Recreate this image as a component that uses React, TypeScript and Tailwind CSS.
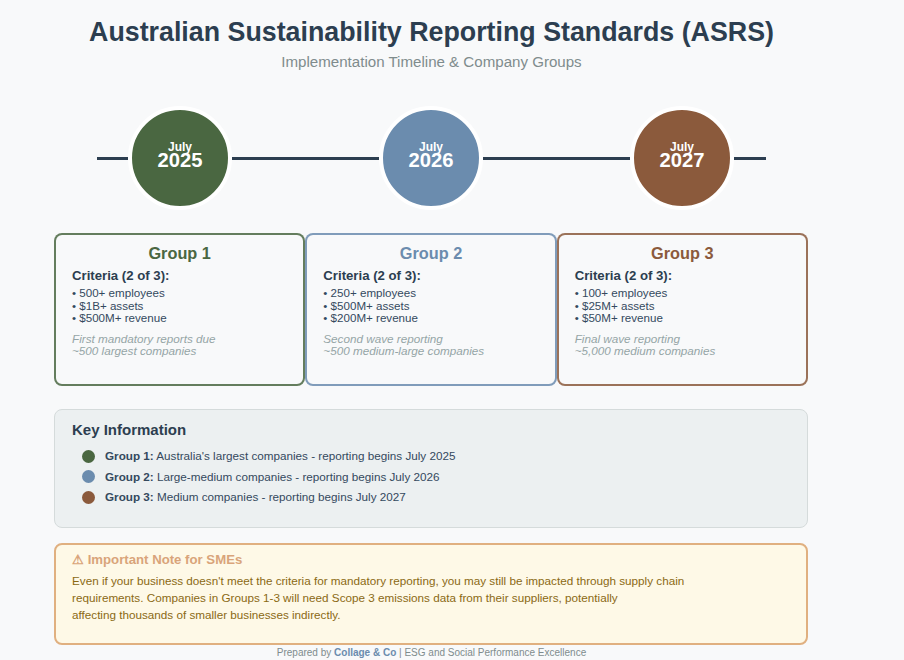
import React from "react";

const FONT = "font-['Liberation_Sans',Arial,sans-serif]";

const groups = [
  {
    name: "Group 1",
    border: "border-[#4a6741]/85",
    title: "text-[#4a6741]",
    criteria: ["500+ employees", "$1B+ assets", "$500M+ revenue"],
    note: ["First mandatory reports due", "~500 largest companies"],
  },
  {
    name: "Group 2",
    border: "border-[#6b8cae]/85",
    title: "text-[#6b8cae]",
    criteria: ["250+ employees", "$500M+ assets", "$200M+ revenue"],
    note: ["Second wave reporting", "~500 medium-large companies"],
  },
  {
    name: "Group 3",
    border: "border-[#8b5a3c]/85",
    title: "text-[#8b5a3c]",
    criteria: ["100+ employees", "$25M+ assets", "$50M+ revenue"],
    note: ["Final wave reporting", "~5,000 medium companies"],
  },
];

const keyRows = [
  { dot: "bg-[#4a6741]", label: "Group 1:", text: "Australia's largest companies - reporting begins July 2025" },
  { dot: "bg-[#6b8cae]", label: "Group 2:", text: "Large-medium companies - reporting begins July 2026" },
  { dot: "bg-[#8b5a3c]", label: "Group 3:", text: "Medium companies - reporting begins July 2027" },
];

function Milestone({ year, color }: { year: string; color: string }) {
  return (
    <div
      className={`flex h-[104px] w-[104px] shrink-0 flex-col items-center justify-center rounded-full border-[4px] border-white pb-[6px] text-white ${color}`}
    >
      <div className="text-[12px] leading-[11px] font-bold">July</div>
      <div className="text-[20.2px] leading-[15px] font-bold">{year}</div>
    </div>
  );
}

function Segment({ width }: { width: string }) {
  return <div className={`h-[3px] bg-[#2c3e50] ${width}`} />;
}

export default function App() {
  return (
    <div className={`h-[660px] w-[904px] overflow-hidden bg-[#f8f9fa] ${FONT}`}>
      <div className="ml-[54px] w-[755px]">
        <div className="pt-[14px] text-center">
          <h1 className="text-[26.8px] leading-[36px] font-bold text-[#2c3e50]">
            Australian Sustainability Reporting Standards (ASRS)
          </h1>
          <p className="mt-[3px] text-[15.1px] leading-[18px] text-[#7f8c8d]">
            Implementation Timeline &amp; Company Groups
          </p>
        </div>

        <div className="mt-[35px] flex h-[104px] items-center pl-[43px]">
          <Segment width="w-[31px]" />
          <Milestone year="2025" color="bg-[#4a6741]" />
          <Segment width="w-[147px]" />
          <Milestone year="2026" color="bg-[#6b8cae]" />
          <Segment width="w-[147px]" />
          <Milestone year="2027" color="bg-[#8b5a3c]" />
          <Segment width="w-[32px]" />
        </div>

        <div className="mt-[23px] grid w-[754px] grid-cols-3">
          {groups.map((g) => (
            <div
              key={g.name}
              className={`h-[153px] rounded-[8px] border-2 bg-[#f8f9fa] px-[16px] pt-[7px] ${g.border}`}
            >
              <div className={`text-center text-[16.3px] leading-[22px] font-bold ${g.title}`}>{g.name}</div>
              <div className="mt-[4px] text-[13.2px] leading-[16px] font-bold text-[#2c3e50]">Criteria (2 of 3):</div>
              <div className="mt-[3px] text-[11.6px] leading-[12.5px] text-[#34495e]">
                {g.criteria.map((c) => (
                  <div key={c}>• {c}</div>
                ))}
              </div>
              <div className="mt-[8px] text-[11.7px] leading-[12.5px] text-[#95a5a6] italic">
                {g.note.map((n) => (
                  <div key={n}>{n}</div>
                ))}
              </div>
            </div>
          ))}
        </div>

        <div className="mt-[23px] h-[119px] w-[754px] rounded-[8px] border border-[#d5dbdb] bg-[#ecf0f1] pt-[10px] pl-[17px]">
          <div className="text-[15px] leading-[20px] font-bold text-[#2c3e50]">Key Information</div>
          <div className="mt-[9px] flex flex-col gap-[6.5px]">
            {keyRows.map((r) => (
              <div key={r.label} className="flex h-[14px] items-center pl-[10px] text-[11.7px] text-[#34495e]">
                <span className={`h-[13px] w-[13px] rounded-full ${r.dot}`} />
                <span className="ml-[10px]">
                  <b className="font-bold">{r.label}</b> {r.text}
                </span>
              </div>
            ))}
          </div>
        </div>

        <div className="mt-[15px] h-[102px] w-[754px] rounded-[8px] border-2 border-[#e0b080] bg-[#fef9e7] pt-[7px] pl-[16px]">
          <div className="text-[13.2px] leading-[16px] font-bold text-[#d9a47a]">⚠ Important Note for SMEs</div>
          <div className="mt-[4px] text-[11.7px] leading-[17px] text-[#8b6914]">
            <div>Even if your business doesn't meet the criteria for mandatory reporting, you may still be impacted through supply chain</div>
            <div>requirements. Companies in Groups 1-3 will need Scope 3 emissions data from their suppliers, potentially</div>
            <div>affecting thousands of smaller businesses indirectly.</div>
          </div>
        </div>

        <div className="mt-[2px] text-center text-[10px] leading-[12px] text-[#7f8c8d]">
          Prepared by <b className="font-bold text-[#6b8cae]">Collage &amp; Co</b> | ESG and Social Performance Excellence
        </div>
      </div>
    </div>
  );
}
